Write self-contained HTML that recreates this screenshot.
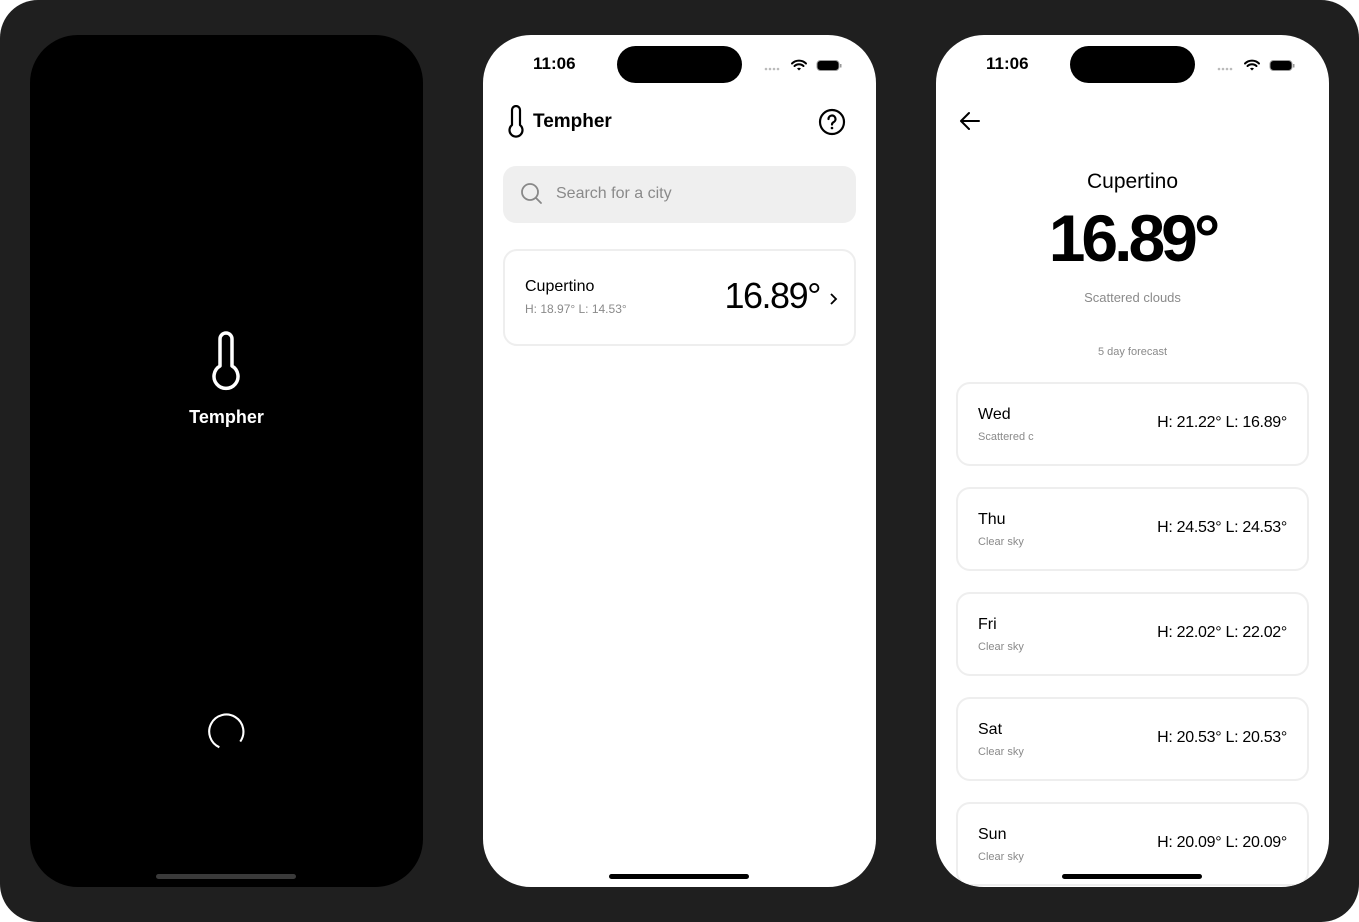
<!DOCTYPE html>
<html><head><meta charset="utf-8"><style>
*{box-sizing:border-box;margin:0;padding:0}
html,body{width:1359px;height:922px;background:#fff;overflow:hidden;font-family:"Liberation Sans",sans-serif}
.frame{position:absolute;left:0;top:0;width:1359px;height:922px;background:#1f1f1f;border-radius:38px}
.ph{position:absolute;top:35px;width:393px;height:852px;border-radius:48px;overflow:hidden;background:#fff}
.abs{position:absolute}
.time{position:absolute;left:50px;top:19px;font-size:17px;font-weight:bold;color:#000}
.island{position:absolute;left:134px;top:11px;width:125px;height:37px;border-radius:19px;background:#000}
.home{position:absolute;left:126px;top:839px;width:140px;height:5px;border-radius:3px;background:#000}
.card{position:absolute;left:20px;width:353px;border:2px solid #eeeeee;border-radius:14px;background:#fff}
.day{position:absolute;left:20px;top:22px;font-size:16px;color:#000}
.desc{position:absolute;left:20px;top:47px;font-size:11px;color:#8a8a8a}
.hl{position:absolute;right:20px;top:30px;font-size:16px;color:#000;letter-spacing:-0.3px;font-weight:500}
</style></head><body>
<div class="frame"></div>

<!-- phone 1 -->
<div class="ph" style="left:30px;background:#000">
  <svg class="abs" style="left:178px;top:295px" width="36" height="64" viewBox="0 0 36 64">
    <path d="M12 36 V9 a6 6 0 0 1 12 0 V36 a12 12 0 1 1 -12 0 Z" fill="none" stroke="#fff" stroke-width="3.5" stroke-linejoin="round"/>
  </svg>
  <div class="abs" style="left:0;width:393px;top:372px;text-align:center;color:#fff;font-weight:bold;font-size:18px">Tempher</div>
  <svg class="abs" style="left:176px;top:678px" width="40" height="40" viewBox="0 0 40 40">
    <path d="M13 35 A18 18 0 1 1 35 29" fill="none" stroke="#fff" stroke-width="2.2" transform="translate(1,1) scale(.95)"/>
  </svg>
  <div class="home" style="background:#3a3a3a"></div>
</div>

<!-- phone 2 -->
<div class="ph" style="left:483px">
  <div class="time">11:06</div>
  <div class="island"></div>
  <svg class="abs" style="left:281px;top:24px" width="80" height="14" viewBox="0 0 80 14">
    <g fill="#bbb"><circle cx="2" cy="10" r="1.3"/><circle cx="6" cy="10" r="1.3"/><circle cx="10" cy="10" r="1.3"/><circle cx="14" cy="10" r="1.3"/></g>
    <path d="M28 4.5 a10 10 0 0 1 14 0 M30.5 7 a6.5 6.5 0 0 1 9 0" stroke="#000" stroke-width="2" fill="none" stroke-linecap="round"/>
    <path d="M33 9.5 L35 11.5 L37 9.5 a3 3 0 0 0 -4 0Z" fill="#000"/>
    <rect x="53" y="1.5" width="22" height="10" rx="3.5" fill="#000" stroke="#999" stroke-width="1"/>
    <rect x="76" y="5" width="1.5" height="3.5" fill="#999"/>
  </svg>
  <svg class="abs" style="left:24px;top:70px" width="18" height="33" viewBox="0 0 18 33">
    <path d="M5 20 V5 a4 4 0 0 1 8 0 V20 a6.5 6.5 0 1 1 -8 0 Z" fill="none" stroke="#000" stroke-width="2.2" stroke-linejoin="round"/>
  </svg>
  <div class="abs" style="left:50px;top:76px;font-size:19px;font-weight:bold;color:#000">Tempher</div>
  <svg class="abs" style="left:335px;top:73px" width="28" height="28" viewBox="0 0 28 28">
    <circle cx="14" cy="14" r="12" fill="none" stroke="#000" stroke-width="2.2"/>
    <path d="M10.5 11 a3.5 3.5 0 1 1 5 3.2 c-1 .5 -1.5 1.2 -1.5 2.3" fill="none" stroke="#000" stroke-width="2.2" stroke-linecap="round"/>
    <circle cx="14" cy="20" r="1.3" fill="#000"/>
  </svg>
  <div class="abs" style="left:20px;top:131px;width:353px;height:57px;background:#efefef;border-radius:13px">
    <svg class="abs" style="left:17px;top:16px" width="24" height="24" viewBox="0 0 24 24">
      <circle cx="10" cy="10" r="8" fill="none" stroke="#888" stroke-width="1.8"/>
      <path d="M16 16 L21 21" stroke="#888" stroke-width="1.8" stroke-linecap="round"/>
    </svg>
    <div class="abs" style="left:53px;top:19px;font-size:16px;color:#8a8a8a">Search for a city</div>
  </div>
  <div class="card" style="top:214px;height:97px">
    <div class="abs" style="left:20px;top:27px;font-size:16px;color:#000">Cupertino</div>
    <div class="abs" style="left:20px;top:51px;font-size:12px;color:#8a8a8a">H: 18.97° L: 14.53°</div>
    <div class="abs" style="right:34px;top:24px;font-size:36px;color:#000;letter-spacing:-1.5px">16.89°</div>
    <svg class="abs" style="left:324px;top:41px" width="10" height="14" viewBox="0 0 10 14">
      <path d="M2 2 L7 7 L2 12" fill="none" stroke="#000" stroke-width="1.8"/>
    </svg>
  </div>
  <div class="home"></div>
</div>

<!-- phone 3 -->
<div class="ph" style="left:936px">
  <div class="time">11:06</div>
  <div class="island"></div>
  <svg class="abs" style="left:281px;top:24px" width="80" height="14" viewBox="0 0 80 14">
    <g fill="#bbb"><circle cx="2" cy="10" r="1.3"/><circle cx="6" cy="10" r="1.3"/><circle cx="10" cy="10" r="1.3"/><circle cx="14" cy="10" r="1.3"/></g>
    <path d="M28 4.5 a10 10 0 0 1 14 0 M30.5 7 a6.5 6.5 0 0 1 9 0" stroke="#000" stroke-width="2" fill="none" stroke-linecap="round"/>
    <path d="M33 9.5 L35 11.5 L37 9.5 a3 3 0 0 0 -4 0Z" fill="#000"/>
    <rect x="53" y="1.5" width="22" height="10" rx="3.5" fill="#000" stroke="#999" stroke-width="1"/>
    <rect x="76" y="5" width="1.5" height="3.5" fill="#999"/>
  </svg>
  <svg class="abs" style="left:22px;top:75px" width="24" height="22" viewBox="0 0 24 22">
    <path d="M21 11 H4 M11 3 L3 11 L11 19" fill="none" stroke="#000" stroke-width="2" stroke-linecap="round" stroke-linejoin="round"/>
  </svg>
  <div class="abs" style="left:0;width:393px;top:135px;text-align:center;font-size:21px;color:#000">Cupertino</div>
  <div class="abs" style="left:0;width:393px;top:165px;text-align:center;font-size:66px;color:#000;letter-spacing:-4px;font-weight:bold">16.89°</div>
  <div class="abs" style="left:0;width:393px;top:255px;text-align:center;font-size:13px;color:#8a8a8a">Scattered clouds</div>
  <div class="abs" style="left:0;width:393px;top:311px;text-align:center;font-size:11px;color:#8a8a8a">5 day forecast</div>
  <div class="card" style="top:347px;height:84px"><div class="day">Wed</div><div class="desc">Scattered c</div><div class="hl">H: 21.22° L: 16.89°</div></div>
  <div class="card" style="top:452px;height:84px"><div class="day">Thu</div><div class="desc">Clear sky</div><div class="hl">H: 24.53° L: 24.53°</div></div>
  <div class="card" style="top:557px;height:84px"><div class="day">Fri</div><div class="desc">Clear sky</div><div class="hl">H: 22.02° L: 22.02°</div></div>
  <div class="card" style="top:662px;height:84px"><div class="day">Sat</div><div class="desc">Clear sky</div><div class="hl">H: 20.53° L: 20.53°</div></div>
  <div class="card" style="top:767px;height:84px"><div class="day">Sun</div><div class="desc">Clear sky</div><div class="hl">H: 20.09° L: 20.09°</div></div>
  <div class="home"></div>
</div>
</body></html>
